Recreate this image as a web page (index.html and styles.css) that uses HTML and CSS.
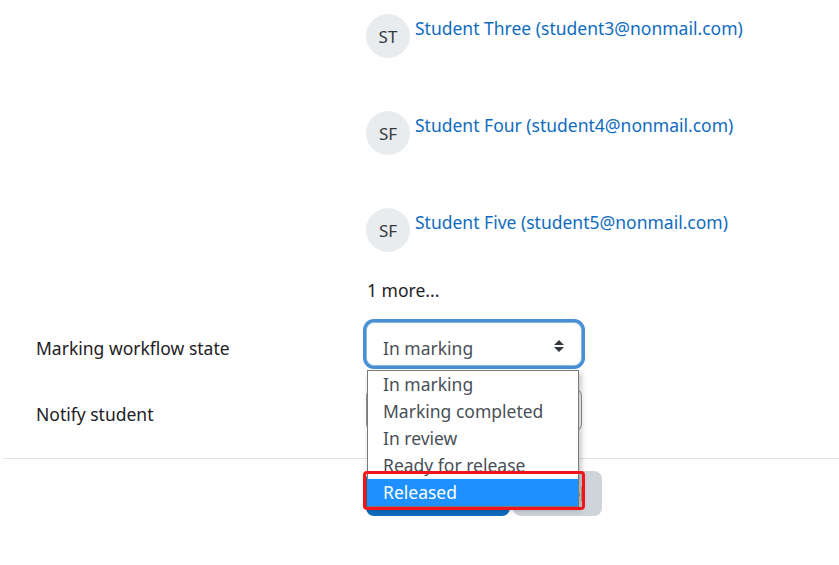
FILE: index.html
```html
<!DOCTYPE html>
<html>
<head>
    <meta charset="UTF-8" />
    <meta name="viewport" content="width=device-width, initial-scale=1.0">
    <link rel="stylesheet" href="styles.css">
</head>
<body>

    <main class="page">

        <div class="form-row">
            <div class="label"></div>
            <div class="field">
                <div class="user">
                    <span class="avatar">ST</span>
                    <a class="user-link" href="#">Student Three (student3@nonmail.com)</a>
                </div>
                <div class="user">
                    <span class="avatar">SF</span>
                    <a class="user-link" href="#">Student Four (student4@nonmail.com)</a>
                </div>
                <div class="user">
                    <span class="avatar">SF</span>
                    <a class="user-link" href="#">Student Five (student5@nonmail.com)</a>
                </div>
                <div class="more">1 more...</div>
            </div>
        </div>

        <div class="form-row row-workflow">
            <label class="label" for="workflow">Marking workflow state</label>
            <div class="field">
                <div class="select-wrap">
                    <div class="select focused" id="workflow">
                        <span class="select-text">In marking</span>
                        <svg class="caret" width="12" height="14" viewBox="0 0 12 14">
                            <path d="M6 1 L11 6 H1 Z M6 13 L11 8 H1 Z" fill="#343a40"/>
                        </svg>
                    </div>

                    <ul class="dropdown">
                        <li>In marking</li>
                        <li>Marking completed</li>
                        <li>In review</li>
                        <li>Ready for release</li>
                        <li class="selected">Released</li>
                    </ul>
                    <div class="highlight-box"></div>
                </div>
            </div>
        </div>

        <div class="form-row row-notify">
            <label class="label" for="notify">Notify student</label>
            <div class="field">
                <div class="select" id="notify"></div>
            </div>
        </div>

        <hr class="divider">

        <div class="form-row">
            <div class="label"></div>
            <div class="field buttons">
                <button class="btn btn-primary">Save changes</button>
                <button class="btn btn-secondary">Cancel</button>
            </div>
        </div>

    </main>

</body>
</html>
```

FILE: styles.css
```css
* {
    margin: 0;
    padding: 0;
    box-sizing: border-box;
}

body {
    font-family: "Noto Sans", "Open Sans", sans-serif;
    font-size: 17.5px;
    color: #1d2125;
    background: #fff;
}

.page {
    width: 839px;
    padding-top: 14px;
}

.form-row {
    display: grid;
    grid-template-columns: 366px 1fr;
}

.label {
    padding-left: 36px;
}

.row-workflow .label,
.row-notify .label {
    padding-top: 7px;
}

.user {
    display: flex;
    align-items: flex-start;
    gap: 5px;
    height: 97px;
}

.avatar {
    width: 44px;
    height: 44px;
    border-radius: 50%;
    background: #e9ecef;
    color: #343a40;
    display: flex;
    align-items: center;
    justify-content: center;
    font-size: 17px;
    flex-shrink: 0;
}

.user-link {
    color: #0f6cbf;
    text-decoration: none;
    line-height: 28px;
}

.more {
    margin-top: -29px;
    line-height: 28px;
    padding-left: 1px;
}

.row-workflow {
    margin-top: 18px;
    align-items: center;
}

.row-notify {
    margin-top: 22px;
    align-items: center;
}

.select-wrap {
    position: relative;
    width: 216px;
}

.select {
    width: 216px;
    height: 44px;
    border: 1px solid #8f959e;
    border-radius: 8px;
    padding: 0 16px;
    display: flex;
    align-items: center;
    justify-content: space-between;
    color: #495057;
    background: #fff;
}

.select-text {
    padding-top: 7px;
}

.caret {
    margin-top: 4px;
}

.select.focused {
    border-color: #87b6df;
    box-shadow: 0 0 0 3px #4a8fd3;
}

.dropdown {
    position: absolute;
    top: 48px;
    left: 1px;
    width: 212px;
    list-style: none;
    background: #fff;
    border: 1px solid #7a7a7a;
    box-shadow: 2px 3px 6px rgba(0, 0, 0, 0.25);
    z-index: 2;
}

.dropdown li {
    height: 27px;
    line-height: 27px;
    padding-left: 15px;
    color: #495057;
}

.dropdown li.selected {
    background: #1e90ff;
    color: #fff;
}

.highlight-box {
    position: absolute;
    top: 149px;
    left: -3px;
    width: 222px;
    height: 39px;
    border: 3px solid #f5141b;
    border-radius: 4px;
    z-index: 3;
}

.divider {
    border: 0;
    border-top: 1px solid #dee2e6;
    margin: 26px 0 12px 3px;
}

.buttons {
    display: flex;
    gap: 3px;
}

.btn {
    font-family: inherit;
    font-size: 17.5px;
    height: 45px;
    border: 0;
    border-radius: 8px;
    padding: 0 16px;
    white-space: nowrap;
}

.btn-primary {
    background: #0f6cbf;
    color: #fff;
    width: 144px;
}

.btn-secondary {
    background: #ced4da;
    color: #1d2125;
    width: 89px;
}
```
